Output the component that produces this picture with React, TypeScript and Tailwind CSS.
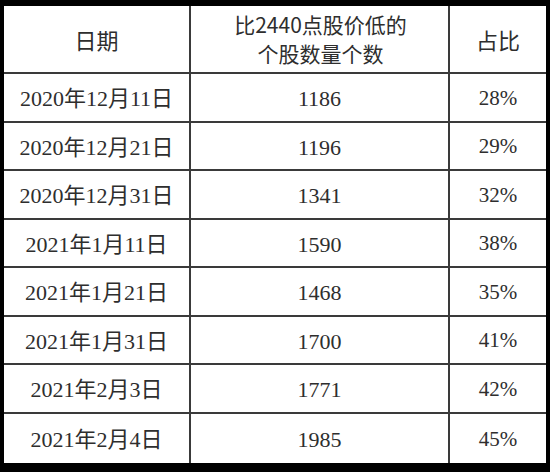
import React from 'react';

const rows = [
  { date: '2020年12月11日', count: '1186', pct: '28%', h: 'h-[49px]' },
  { date: '2020年12月21日', count: '1196', pct: '29%', h: 'h-[48px]' },
  { date: '2020年12月31日', count: '1341', pct: '32%', h: 'h-[49px]' },
  { date: '2021年1月11日', count: '1590', pct: '38%', h: 'h-[48px]' },
  { date: '2021年1月21日', count: '1468', pct: '35%', h: 'h-[49px]' },
  { date: '2021年1月31日', count: '1700', pct: '41%', h: 'h-[48px]' },
  { date: '2021年2月3日', count: '1771', pct: '42%', h: 'h-[49px]' },
  { date: '2021年2月4日', count: '1985', pct: '45%', h: 'h-[49px]' },
];

const sans = { fontFamily: '"Noto Sans CJK SC", "Liberation Sans", sans-serif' };
const serif = { fontFamily: '"Liberation Serif", "Noto Sans CJK SC", serif' };

export default function App() {
  return (
    <div className="w-[550px] h-[472px] bg-black pt-[6px] pl-[4px] pr-[4px]">
      <div className="w-[542px] bg-white text-[#2e2e2e] text-[22px]">
        {/* Header */}
        <div className="flex h-[68px] border-b-2 border-[#3a3a3a]" style={sans}>
          <div className="w-[187px] flex items-center justify-center border-r-2 border-[#3a3a3a]">日期</div>
          <div className="w-[259px] flex flex-col items-center justify-center text-[21px] leading-[29px] border-r-2 border-[#3a3a3a] pl-[2px]">
            <span className="block">比2440点股价低的</span>
            <span className="block">个股数量个数</span>
          </div>
          <div className="flex-1 flex items-center justify-center">占比</div>
        </div>

        {/* Body */}
        {rows.map((r, i) => (
          <div
            key={r.date}
            className={`flex ${r.h} ${i < rows.length - 1 ? 'border-b-2 border-[#3a3a3a]' : ''}`}
            style={serif}
          >
            <div className="w-[187px] flex items-center justify-center border-r-2 border-[#3a3a3a] pt-[2px]">{r.date}</div>
            <div className="w-[259px] flex items-center justify-center border-r-2 border-[#3a3a3a] pt-[2px]">{r.count}</div>
            <div className="flex-1 flex items-center justify-center pt-[2px] text-[21px]">{r.pct}</div>
          </div>
        ))}
      </div>
    </div>
  );
}
